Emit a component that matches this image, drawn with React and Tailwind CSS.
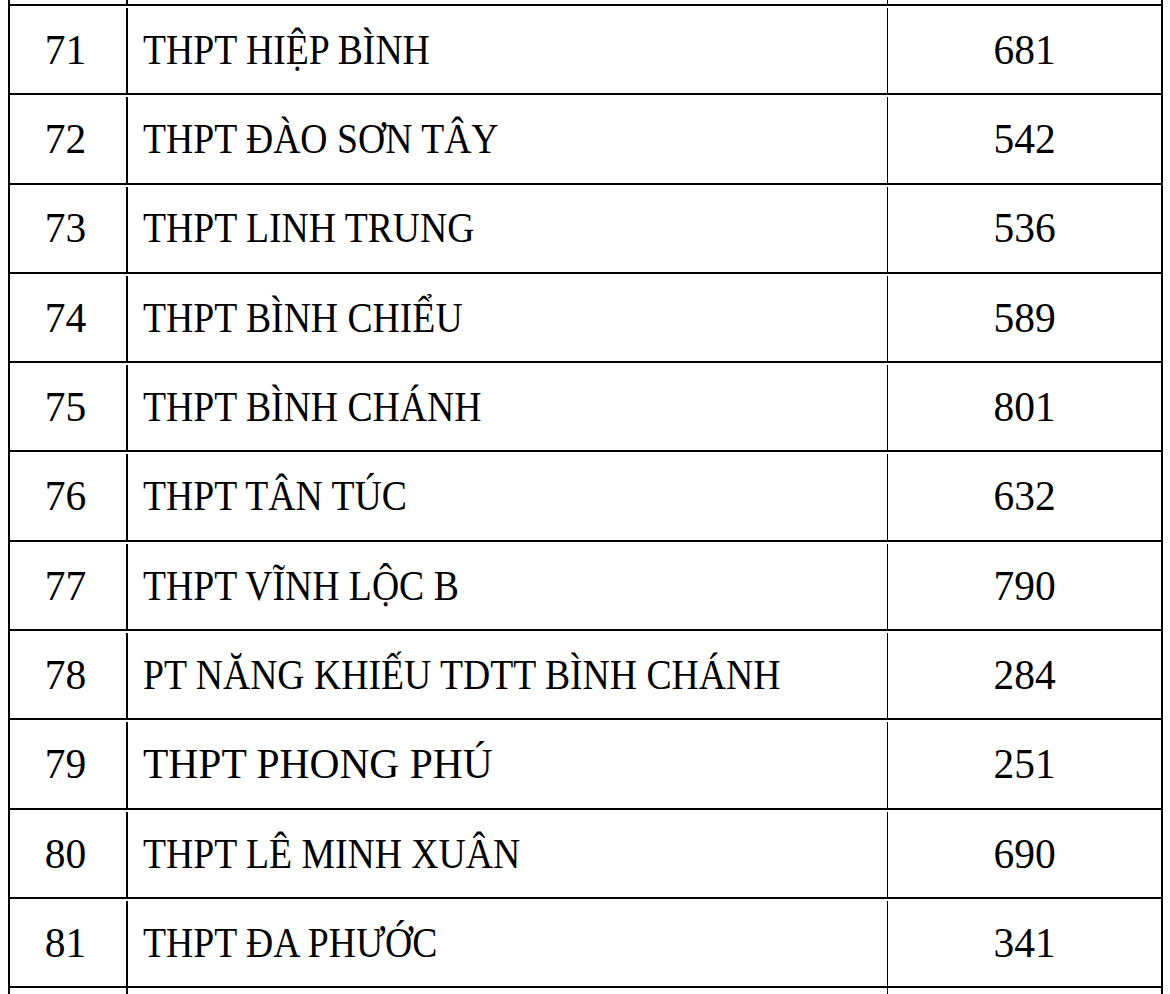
const rows = [
  ['71', 'THPT HIỆP BÌNH', '681', true],
  ['72', 'THPT ĐÀO SƠN TÂY', '542', true],
  ['73', 'THPT LINH TRUNG', '536', true],
  ['74', 'THPT BÌNH CHIỂU', '589', true],
  ['75', 'THPT BÌNH CHÁNH', '801', true],
  ['76', 'THPT TÂN TÚC', '632', true],
  ['77', 'THPT VĨNH LỘC B', '790', true],
  ['78', 'PT NĂNG KHIẾU TDTT BÌNH CHÁNH', '284', true],
  ['79', 'THPT PHONG PHÚ', '251', false],
  ['80', 'THPT LÊ MINH XUÂN', '690', true],
  ['81', 'THPT ĐA PHƯỚC', '341', true],
];

const Row = ({ num, name, total, narrow, className }) => (
  <div className={`flex border-l-2 border-r-2 border-black ${className}`}>
    <div className="w-[118px] shrink-0 border-r-2 border-black flex items-center justify-center pr-[5px]">
      {num}
    </div>
    <div className="w-[760px] shrink-0 border-r border-black flex items-center pl-[15px] whitespace-nowrap">
      <span className={narrow ? 'inline-block origin-left scale-x-[0.908]' : ''}>{name}</span>
    </div>
    <div className="flex-1 flex items-center justify-center">{total}</div>
  </div>
);

const App = () => {
  return (
    <div
      className="h-[994px] w-[1170px] overflow-hidden bg-white text-black text-[41.5px] leading-none"
      style={{ fontFamily: '"Liberation Serif", "Times New Roman", serif' }}
    >
      <div className="ml-[8px] w-[1155px]">
        <Row className="h-[4px]" />
        {rows.map(([num, name, total, narrow]) => (
          <Row
            key={num}
            num={num}
            name={name}
            total={total}
            narrow={narrow}
            className="h-[89.3px] border-t-2 pt-[2px]"
          />
        ))}
        <Row className="h-[10px] border-t-2" />
      </div>
    </div>
  );
};

export default App;
